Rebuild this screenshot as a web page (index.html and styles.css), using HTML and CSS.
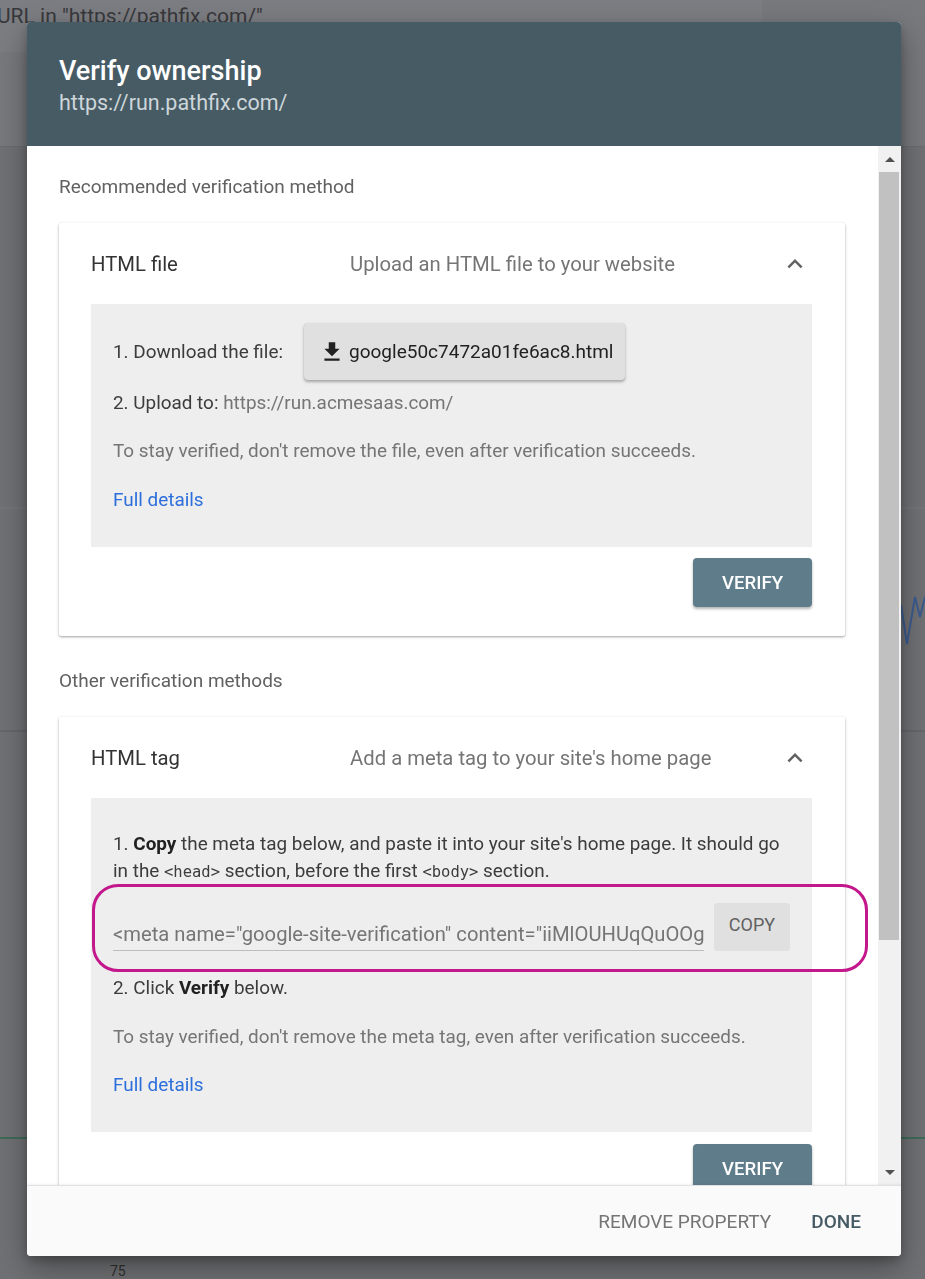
FILE: index.html
```html
<!DOCTYPE html>
<html lang="en">
<head>
<meta charset="utf-8">
<title>Verify ownership</title>
<link rel="stylesheet" href="styles.css">
</head>
<body>
<div class="page">
  <div class="page-top">
    <div class="search">URL in "https://pathfix.com/"</div>
  </div>
  <div class="page-main">
    <svg class="chart" width="925" height="1130" viewBox="0 0 925 1130">
      <line x1="0" y1="361" x2="925" y2="361" stroke="#7a7b7f" stroke-width="1"/>
      <line x1="0" y1="584" x2="925" y2="584" stroke="#5e5f62" stroke-width="1"/>
      <polyline points="901,458 907,497 915,450 920,470 925,450" fill="none" stroke="#3b5b8e" stroke-width="2"/>
      <line x1="0" y1="991" x2="925" y2="991" stroke="#3f6b55" stroke-width="2"/>
    </svg>
    <div class="axis-label">75</div>
  </div>
</div>

<div class="scrim">
  <div class="dialog">
    <header class="dlg-head">
      <h1 class="dlg-title">Verify ownership</h1>
      <div class="dlg-url">https://run.pathfix.com/</div>
    </header>

    <div class="dlg-body">
      <div class="dlg-scroll">
        <div class="section-label">Recommended verification method</div>

        <section class="card">
          <div class="card-head">
            <div class="card-title">HTML file</div>
            <div class="card-sub">Upload an HTML file to your website</div>
            <svg class="chevron" width="30" height="30" viewBox="0 0 24 24"><path d="M12 8l-6 6 1.41 1.41L12 10.83l4.59 4.58L18 14z" fill="#616161"/></svg>
          </div>
          <div class="panel">
            <div class="download-row">
              <span>1. Download the file:</span>
              <button class="file-btn" type="button">
                <svg width="26" height="26" viewBox="0 0 24 24"><path d="M19 9h-4V3H9v6H5l7 7 7-7zM5 18v2h14v-2H5z" fill="#212121"/></svg>
                <span>google50c7472a01fe6ac8.html</span>
              </button>
            </div>
            <p class="step step-upload">2. Upload to: <span class="muted">https://run.acmesaas.com/</span></p>
            <p class="step muted gap-21">To stay verified, don't remove the file, even after verification succeeds.</p>
            <p class="step gap-22"><a class="link" href="#">Full details</a></p>
          </div>
          <div class="card-actions">
            <button class="verify-btn" type="button">VERIFY</button>
          </div>
        </section>

        <div class="section-label section-label-second">Other verification methods</div>

        <section class="card">
          <div class="card-head">
            <div class="card-title">HTML tag</div>
            <div class="card-sub">Add a meta tag to your site's home page</div>
            <svg class="chevron" width="30" height="30" viewBox="0 0 24 24"><path d="M12 8l-6 6 1.41 1.41L12 10.83l4.59 4.58L18 14z" fill="#616161"/></svg>
          </div>
          <div class="panel panel-tag">
            <p class="step">1. <b>Copy</b> the meta tag below, and paste it into your site's home page. It should go in the <code>&lt;head&gt;</code> section, before the first <code>&lt;body&gt;</code> section.</p>
            <div class="meta-row">
              <div class="meta-field">&lt;meta name="google-site-verification" content="iiMlOUHUqQuOOg</div>
              <button class="copy-btn" type="button">COPY</button>
              <div class="highlight"></div>
            </div>
            <p class="step gap-23">2. Click <b>Verify</b> below.</p>
            <p class="step muted gap-22">To stay verified, don't remove the meta tag, even after verification succeeds.</p>
            <p class="step gap-21"><a class="link" href="#">Full details</a></p>
          </div>
          <div class="card-actions card-actions-tag">
            <button class="verify-btn" type="button">VERIFY</button>
          </div>
        </section>
      </div>

      <div class="scrollbar">
        <div class="sb-arrow"><span class="tri tri-up"></span></div>
        <div class="sb-thumb"></div>
        <div class="sb-track"></div>
        <div class="sb-arrow"><span class="tri tri-down"></span></div>
      </div>
    </div>

    <footer class="dlg-foot">
      <button class="text-btn text-btn-muted" type="button">REMOVE PROPERTY</button>
      <button class="text-btn text-btn-primary" type="button">DONE</button>
    </footer>
  </div>
</div>
</body>
</html>
```

FILE: styles.css
```css
* {
  box-sizing: border-box;
}

html, body {
  margin: 0;
  padding: 0;
}

body {
  width: 925px;
  height: 1279px;
  overflow: hidden;
  font-family: Roboto, "Noto Sans", "Liberation Sans", sans-serif;
  background: #727376;
}

/* dimmed page underneath the dialog */
.page {
  width: 925px;
  height: 1279px;
  display: flex;
  flex-direction: column;
}

.page-top {
  height: 149px;
  background: #78797d;
  border-bottom: 1px solid #6b6c6f;
}

.search {
  width: 765px;
  height: 52px;
  background: #7c7d82;
  color: #37383b;
  font-size: 21px;
  line-height: 24px;
  padding-top: 4px;
  margin-left: -3px;
  white-space: nowrap;
}

.page-main {
  flex: 1;
  display: flex;
  flex-direction: column;
  background: #707174;
}

.chart {
  display: block;
  flex: none;
}

.axis-label {
  margin-top: -14px;
  padding-left: 110px;
  font-size: 14px;
  line-height: 16px;
  color: #2f3032;
}

/* modal layer */
.scrim {
  position: fixed;
  inset: 0;
  padding: 22px 0 0 27px;
}

.dialog {
  width: 874px;
  height: 1234px;
  background: #fff;
  border-radius: 4px;
  overflow: hidden;
  display: flex;
  flex-direction: column;
  box-shadow: 0 12px 30px rgba(0, 0, 0, 0.35), 0 4px 10px rgba(0, 0, 0, 0.2);
}

.dlg-head {
  height: 124px;
  flex: none;
  background: #475b65;
  padding: 33px 32px 0;
}

.dlg-title {
  margin: 0;
  font-size: 27px;
  line-height: 32px;
  font-weight: 500;
  color: #fff;
}

.dlg-url {
  margin-top: 2px;
  font-size: 21.5px;
  line-height: 28px;
  color: #cdd6da;
}

.dlg-body {
  height: 1039px;
  flex: none;
  display: flex;
  overflow: hidden;
}

.dlg-scroll {
  width: 851px;
  flex: none;
  padding: 27px 33px 0 32px;
  overflow: hidden;
}

.section-label {
  font-size: 19px;
  line-height: 27px;
  color: #616161;
  margin-bottom: 23px;
}

.section-label-second {
  margin-top: 31px;
}

.card {
  background: #fff;
  border-radius: 2px;
  box-shadow: 0 1px 3px rgba(0, 0, 0, 0.28), 0 1px 2px rgba(0, 0, 0, 0.12);
}

.card-head {
  height: 81px;
  display: flex;
  align-items: center;
  padding: 0 35px 0 32px;
}

.card-title {
  width: 259px;
  flex: none;
  font-size: 20.3px;
  color: #333;
}

.card-sub {
  flex: 1;
  font-size: 20.3px;
  color: #757575;
}

.chevron {
  flex: none;
  display: block;
}

.panel {
  margin: 0 33px 0 32px;
  background: #eeeeee;
  padding: 19px 22px 34px;
  font-size: 18.9px;
  color: #3c3c3c;
}

.panel-tag {
  padding-top: 32px;
}

.download-row {
  display: flex;
  align-items: center;
  height: 57px;
}

.file-btn {
  margin-left: 21px;
  height: 57px;
  display: flex;
  align-items: center;
  gap: 4px;
  padding: 0 11px 0 15px;
  border: none;
  border-radius: 4px;
  background: #e0e0e0;
  box-shadow: 0 2px 3px rgba(0, 0, 0, 0.3), 0 0 1px rgba(0, 0, 0, 0.15);
  font-family: inherit;
  font-size: 19px;
  color: #212121;
}

.file-btn svg {
  display: block;
}

.step {
  margin: 0;
  line-height: 27px;
}

.step-upload {
  margin-top: 9px;
}

.gap-21 {
  margin-top: 21px;
}

.gap-22 {
  margin-top: 22px;
}

.gap-23 {
  margin-top: 23px;
}

.muted {
  color: #757575;
}

.step b {
  font-weight: 700;
  color: #212121;
}

.step code {
  font-family: "DejaVu Sans Mono", monospace;
  font-size: 15.5px;
  line-height: 1;
  color: #3c3c3c;
}

.link {
  color: #2c6fdc;
  text-decoration: none;
}

.meta-row {
  position: relative;
  margin-top: 19px;
  display: flex;
  height: 48px;
}

.meta-field {
  width: 591px;
  flex: none;
  height: 48px;
  padding-top: 18px;
  font-size: 20.2px;
  line-height: 27px;
  color: #757575;
  white-space: nowrap;
  overflow: hidden;
  border-bottom: 1px solid #bdbdbd;
}

.copy-btn {
  margin-left: 10px;
  width: 76px;
  height: 48px;
  border: none;
  border-radius: 3px;
  background: #e0e0e0;
  font-family: inherit;
  font-size: 18px;
  color: #616161;
  padding: 0 0 6px;
}

/* pink callout ring drawn over the meta tag row */
.highlight {
  position: absolute;
  left: -21px;
  top: -19px;
  right: -78px;
  bottom: -21px;
  border: 3px solid #c2188b;
  border-radius: 26px;
  pointer-events: none;
}

.card-actions {
  display: flex;
  justify-content: flex-end;
  padding: 11px 33px 29px 0;
}

.card-actions-tag {
  padding-top: 12px;
}

.verify-btn {
  width: 119px;
  height: 49px;
  border: none;
  border-radius: 4px;
  background: #5f7c8b;
  color: #fff;
  font-family: inherit;
  font-size: 18.6px;
  font-weight: 500;
  box-shadow: 0 2px 3px rgba(0, 0, 0, 0.3);
}

/* scrollbar column */
.scrollbar {
  width: 23px;
  flex: none;
  display: flex;
  flex-direction: column;
  background: #f1f1f1;
}

.sb-arrow {
  height: 26px;
  flex: none;
  display: flex;
  align-items: center;
  justify-content: center;
}

.tri {
  width: 0;
  height: 0;
  border-left: 5px solid transparent;
  border-right: 5px solid transparent;
}

.tri-up {
  border-bottom: 5px solid #505050;
}

.tri-down {
  border-top: 5px solid #505050;
}

.sb-thumb {
  height: 768px;
  flex: none;
  margin: 0 2px 0 1px;
  background: #c1c1c1;
}

.sb-track {
  flex: 1;
}

.dlg-foot {
  height: 71px;
  flex: none;
  background: #fafafa;
  border-top: 1px solid #e2e2e2;
  box-shadow: 0 -1px 2px rgba(0, 0, 0, 0.06);
  display: flex;
  justify-content: flex-end;
  align-items: center;
  gap: 40px;
  padding-right: 40px;
  position: relative;
}

.text-btn {
  border: none;
  background: none;
  padding: 0;
  font-family: inherit;
  font-size: 19px;
  font-weight: 500;
}

.text-btn-muted {
  color: #757575;
  font-weight: 400;
}

.text-btn-primary {
  color: #455a64;
}
```
